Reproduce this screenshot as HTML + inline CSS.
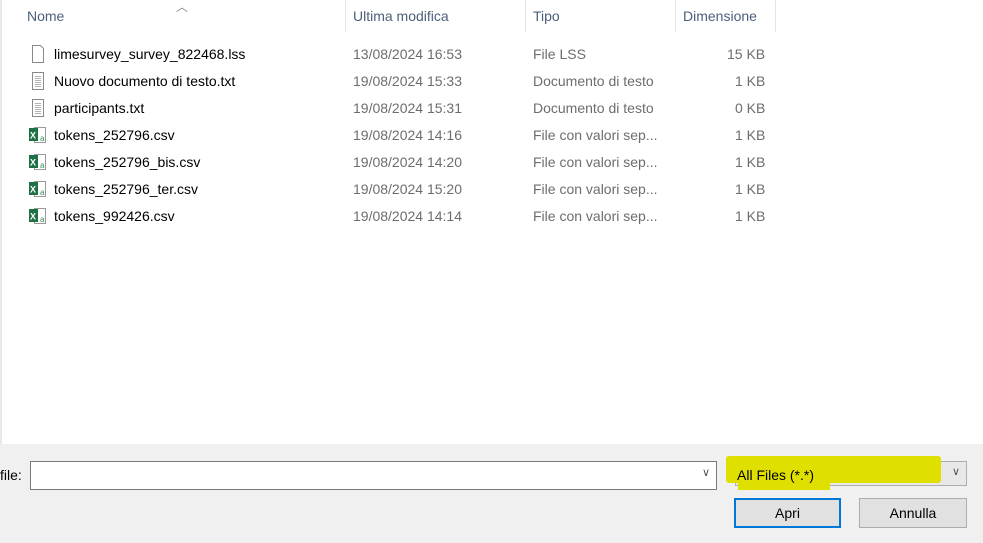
<html><head><style>
body{margin:0;width:983px;height:543px;background:#f0f0f0;font-family:"Liberation Sans",sans-serif;font-size:14px;color:#000;position:relative;overflow:hidden}
.white{position:absolute;left:0;top:0;width:983px;height:444px;background:#fff;border-left:2px solid #e8e8e8;box-sizing:border-box}
.a{position:absolute;white-space:nowrap}
.h{color:#4c607a;top:8px;font-size:14px}
.div{position:absolute;top:0;width:1px;height:32px;background:#e5e5e5}
.g{color:#6d6d6d}
.ic{position:absolute;left:31px;width:14px;height:18px}
.btn{position:absolute;top:498px;height:30px;background:#e1e1e1;border:1px solid #adadad;box-sizing:border-box;text-align:center;line-height:28px}
</style></head><body>
<div class="white"></div>
<div class="a" style="left:176px;top:-2px;color:#888;font-size:12px">︿</div>
<div class="a h" style="left:27px">Nome</div>
<div class="div" style="left:345px"></div>
<div class="a h" style="left:353px">Ultima modifica</div>
<div class="div" style="left:525px"></div>
<div class="a h" style="left:533px">Tipo</div>
<div class="div" style="left:675px"></div>
<div class="a h" style="left:683px">Dimensione</div>
<div class="div" style="left:775px"></div>

<svg class="ic" style="top:45px" viewBox="0 0 14 18"><path d="M1.5 .5h8l3 3v14h-11z" fill="#fff" stroke="#8a8a8a"/></svg>
<div class="a" style="left:54px;top:46px">limesurvey_survey_822468.lss</div>
<div class="a g" style="left:353px;top:46px">13/08/2024 16:53</div>
<div class="a g" style="left:533px;top:46px">File LSS</div>
<div class="a g" style="left:727px;top:46px">15 KB</div>

<svg class="ic" style="top:72px" viewBox="0 0 14 18"><path d="M1.5 .5h11v17h-11z" fill="#fff" stroke="#8a8a8a"/><path d="M4 4.5h6M4 6.5h6M4 8.5h6M4 10.5h6M4 12.5h6M4 14.5h6" stroke="#999" stroke-width=".7"/></svg>
<div class="a" style="left:54px;top:73px">Nuovo documento di testo.txt</div>
<div class="a g" style="left:353px;top:73px">19/08/2024 15:33</div>
<div class="a g" style="left:533px;top:73px">Documento di testo</div>
<div class="a g" style="left:735px;top:73px">1 KB</div>

<svg class="ic" style="top:99px" viewBox="0 0 14 18"><path d="M1.5 .5h11v17h-11z" fill="#fff" stroke="#8a8a8a"/><path d="M4 4.5h6M4 6.5h6M4 8.5h6M4 10.5h6M4 12.5h6M4 14.5h6" stroke="#999" stroke-width=".7"/></svg>
<div class="a" style="left:54px;top:100px">participants.txt</div>
<div class="a g" style="left:353px;top:100px">19/08/2024 15:31</div>
<div class="a g" style="left:533px;top:100px">Documento di testo</div>
<div class="a g" style="left:735px;top:100px">0 KB</div>

<svg class="ic" style="top:126px;left:28px;width:20px" viewBox="0 0 20 18"><path d="M6.5 1.5h11v15h-11z" fill="#fff" stroke="#999"/><text x="12" y="15" font-size="8" fill="#2f8f4f" font-family="Liberation Sans">a</text><rect x="1" y="2" width="9" height="13" fill="#1e7145"/><text x="2" y="12.5" font-size="9" font-weight="bold" fill="#fff" font-family="Liberation Sans">X</text></svg>
<div class="a" style="left:54px;top:127px">tokens_252796.csv</div>
<div class="a g" style="left:353px;top:127px">19/08/2024 14:16</div>
<div class="a g" style="left:533px;top:127px">File con valori sep...</div>
<div class="a g" style="left:735px;top:127px">1 KB</div>

<svg class="ic" style="top:153px;left:28px;width:20px" viewBox="0 0 20 18"><path d="M6.5 1.5h11v15h-11z" fill="#fff" stroke="#999"/><text x="12" y="15" font-size="8" fill="#2f8f4f" font-family="Liberation Sans">a</text><rect x="1" y="2" width="9" height="13" fill="#1e7145"/><text x="2" y="12.5" font-size="9" font-weight="bold" fill="#fff" font-family="Liberation Sans">X</text></svg>
<div class="a" style="left:54px;top:154px">tokens_252796_bis.csv</div>
<div class="a g" style="left:353px;top:154px">19/08/2024 14:20</div>
<div class="a g" style="left:533px;top:154px">File con valori sep...</div>
<div class="a g" style="left:735px;top:154px">1 KB</div>

<svg class="ic" style="top:180px;left:28px;width:20px" viewBox="0 0 20 18"><path d="M6.5 1.5h11v15h-11z" fill="#fff" stroke="#999"/><text x="12" y="15" font-size="8" fill="#2f8f4f" font-family="Liberation Sans">a</text><rect x="1" y="2" width="9" height="13" fill="#1e7145"/><text x="2" y="12.5" font-size="9" font-weight="bold" fill="#fff" font-family="Liberation Sans">X</text></svg>
<div class="a" style="left:54px;top:181px">tokens_252796_ter.csv</div>
<div class="a g" style="left:353px;top:181px">19/08/2024 15:20</div>
<div class="a g" style="left:533px;top:181px">File con valori sep...</div>
<div class="a g" style="left:735px;top:181px">1 KB</div>

<svg class="ic" style="top:207px;left:28px;width:20px" viewBox="0 0 20 18"><path d="M6.5 1.5h11v15h-11z" fill="#fff" stroke="#999"/><text x="12" y="15" font-size="8" fill="#2f8f4f" font-family="Liberation Sans">a</text><rect x="1" y="2" width="9" height="13" fill="#1e7145"/><text x="2" y="12.5" font-size="9" font-weight="bold" fill="#fff" font-family="Liberation Sans">X</text></svg>
<div class="a" style="left:54px;top:208px">tokens_992426.csv</div>
<div class="a g" style="left:353px;top:208px">19/08/2024 14:14</div>
<div class="a g" style="left:533px;top:208px">File con valori sep...</div>
<div class="a g" style="left:735px;top:208px">1 KB</div>

<div class="a" style="left:0;top:467px">file:</div>
<div class="a" style="left:30px;top:461px;width:687px;height:29px;background:#fff;border:1px solid #7a7a7a;box-sizing:border-box"></div>
<div class="a" style="left:702px;top:466px;color:#555;font-size:11px">∨</div>
<div class="a" style="left:735px;top:461px;width:232px;height:25px;background:#e8e8e8;border:1px solid #adadad;box-sizing:border-box"></div>
<div class="a" style="left:952px;top:465px;color:#555;font-size:11px">∨</div>
<div class="a" style="left:726px;top:456px;width:215px;height:27px;background:#e0e000;border-radius:3px"></div>
<div class="a" style="left:738px;top:478px;width:92px;height:12px;background:#e0e000"></div>
<div class="a" style="left:737px;top:467px">All Files (*.*)</div>
<div class="btn" style="left:734px;width:107px;border:2px solid #0078d7;line-height:26px">Apri</div>
<div class="btn" style="left:859px;width:108px">Annulla</div>
</body></html>
